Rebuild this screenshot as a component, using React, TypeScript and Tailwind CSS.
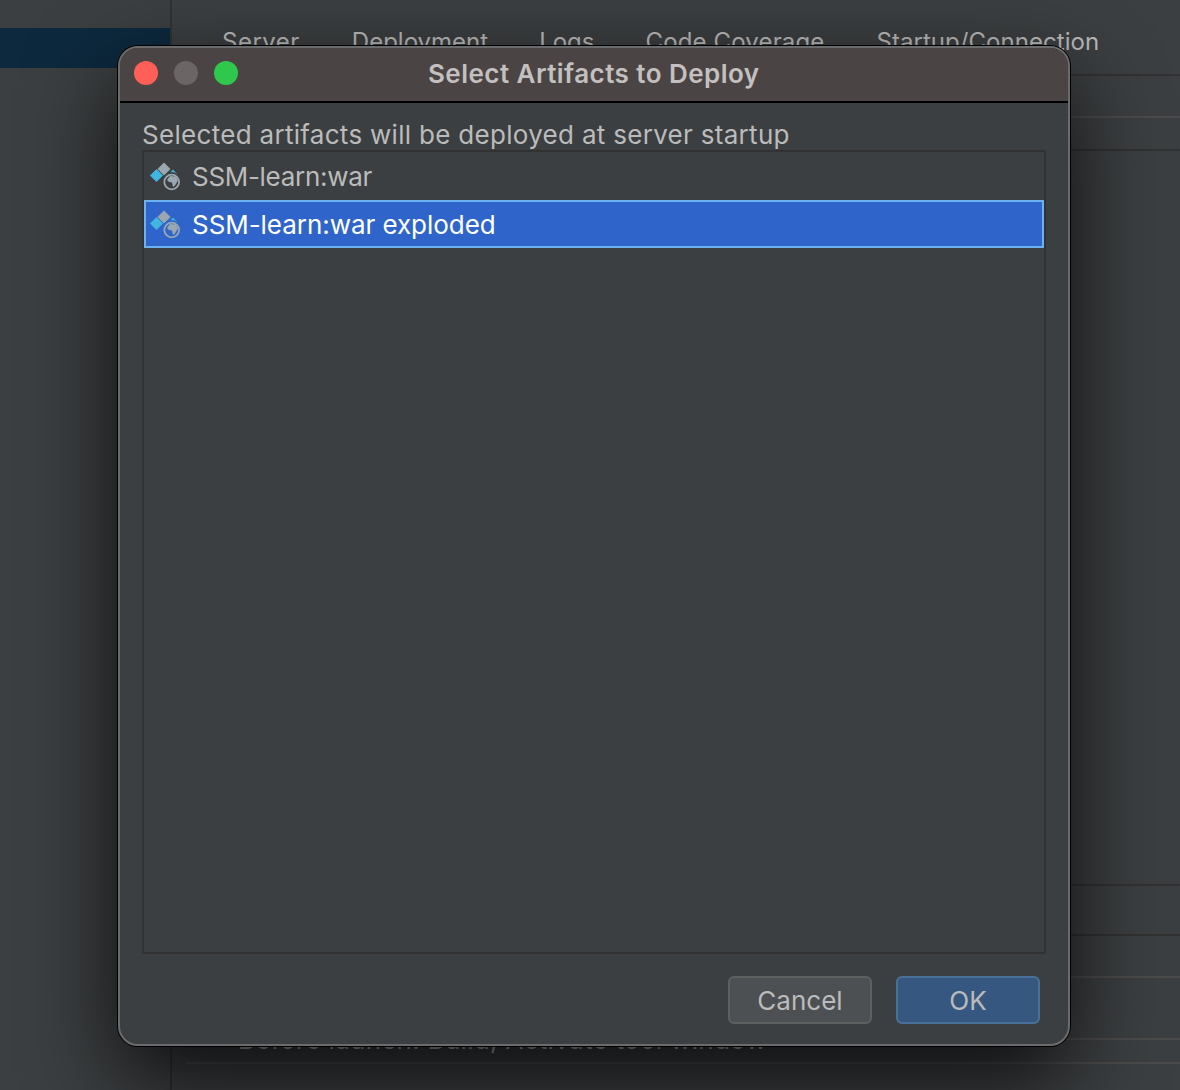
const TABS = [
  { label: "Server", className: "tracking-[0.5px]" },
  { label: "Deployment", className: "" },
  { label: "Logs", className: "-mx-px" },
  { label: "Code Coverage", className: "tracking-[0.15px]" },
  { label: "Startup/Connection", className: "tracking-[0.05px]" },
];

function ArtifactIcon({ selected }: { selected?: boolean }) {
  const cut = selected ? "#2f65ca" : "#3c3f41";
  return (
    <svg width="32" height="32" viewBox="0 1 32 32" className="shrink-0">
      <path d="M14 3.500l6.500 6.500-6.500 6.500L7.500 10z" fill="#9aa7b0" />
      <path d="M6.500 10L13 16.500 6.500 23 0 16.500z" fill="#40b6e0" />
      <path d="M23 10.500l6 6.500H17z" fill="#40b6e0" />
      <circle cx="21.700" cy="23" r="10" fill={cut} />
      <circle cx="21.700" cy="23" r="7.400" fill="none" stroke="#9aa7b0" strokeWidth="1.800" />
      <path d="M17 21l3-4 6 .5 2 4-3 5-2 1.500-1-4.500-3-.5z" fill="#9aa7b0" />
    </svg>
  );
}

export default function App() {
  return (
    <div className="relative flex h-[1090px] w-[1180px] overflow-hidden bg-[#3c3f41] font-['Inter',sans-serif] text-[26px] text-[#bbbbbb]">
      <div className="w-[172px] shrink-0 border-r-2 border-[#323232] pt-7">
        <div className="h-10 bg-[#0d293e]" />
      </div>

      <div className="flex flex-1 flex-col">
        <div className="flex h-[76px] items-start gap-[52px] border-b-2 border-[#323232] pl-[50px] pt-[26px] text-[24px] leading-[32px]">
          {TABS.map((tab) => (
            <span key={tab.label} className={tab.className}>
              {tab.label}
            </span>
          ))}
        </div>
        <div className="h-[42px] border-b-2 border-[#4b4b4b]" />
        <div className="h-[33px] border-b-2 border-[#323232]" />
        <div className="h-[735px] border-b-2 border-[#323232]" />
        <div className="h-[50px] border-b-2 border-[#323232]" />
        <div className="h-[42px] border-b-2 border-[#4b4b4b]" />
        <div className="h-[62px] whitespace-nowrap border-b-2 border-[#4b4b4b] pl-[66px] pt-[46px] text-[26px] leading-[32px] tracking-[0.3px]">
          Before launch: Build, Activate tool window
        </div>
        <div className="h-[22px]" />
        <div className="ml-[14px] h-0.5 bg-[#4b4b4b]" />
      </div>

      <div className="absolute left-[118px] top-[46px] flex h-[1000px] w-[952px] flex-col overflow-hidden rounded-[20px] border-2 border-[#6a6b6c] bg-[#3c3f41] shadow-[0_0_0_1px_#000,0_34px_90px_rgba(0,0,0,0.8)]">
        <div className="flex h-[55px] shrink-0 items-start border-b-2 border-black bg-[#4a4544] pl-[14px] pt-[13px]">
          <div className="flex gap-4">
            <span className="h-6 w-6 rounded-full bg-[#ff5f57]" />
            <span className="h-6 w-6 rounded-full bg-[#6b6665]" />
            <span className="h-6 w-6 rounded-full bg-[#2fc84c]" />
          </div>
          <span className="ml-[190px] text-[26px] font-semibold leading-[26px] tracking-[0.46px] text-[#c4c0bf]">Select Artifacts to Deploy</span>
        </div>

        <div className="flex flex-1 flex-col px-[22px]">
          <div className="h-[47px] pt-4 leading-8 tracking-[0.3px]">Selected artifacts will be deployed at server startup</div>
          <div className="flex h-[804px] flex-col border-2 border-[#323232]">
            <div className="flex h-12 items-center gap-2.5 pl-1.5">
              <ArtifactIcon />
              <span className="tracking-[-0.3px]">SSM-learn:war</span>
            </div>
            <div className="flex h-12 items-center gap-2.5 border-2 border-[#6cb2f0] bg-[#2f65ca] pl-1 text-white">
              <ArtifactIcon selected />
              <span className="tracking-[-0.05px]">SSM-learn:war exploded</span>
            </div>
          </div>
          <div className="mt-[22px] flex justify-end gap-6 pr-[6px]">
            <button className="h-12 w-36 rounded-md border-2 border-[#5e6060] bg-[#4c5052] pt-px">Cancel</button>
            <button className="h-12 w-36 rounded-md border-2 border-[#4a7199] bg-[#365880] pt-px">OK</button>
          </div>
        </div>
      </div>
    </div>
  );
}
